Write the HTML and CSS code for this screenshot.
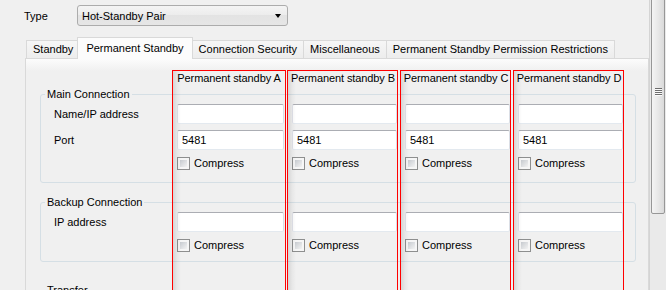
FILE: index.html
```html
<!DOCTYPE html>
<html lang="en">
<head>
    <meta charset="UTF-8">
    <title>Hot-Standby Pair</title>
    <link rel="stylesheet" href="styles.css">
</head>
<body>
    <div class="window">
        <div class="content">
            <div class="type-row">
                <span class="type-label">Type</span>
                <div class="combo">
                    <span>Hot-Standby Pair</span>
                    <span class="arrow"></span>
                </div>
            </div>

            <div class="tabs">
                <div class="tab-strip">
                    <div class="tab">Standby</div>
                    <div class="tab selected">Permanent Standby</div>
                    <div class="tab">Connection Security</div>
                    <div class="tab">Miscellaneous</div>
                    <div class="tab">Permanent Standby Permission Restrictions</div>
                </div>

                <div class="pane">
                    <div class="frames">
                        <div class="frame"></div>
                        <div class="frame"></div>
                        <div class="frame"></div>
                        <div class="frame"></div>
                    </div>

                    <div class="head-row">
                        <span></span>
                        <div class="col-head">Permanent standby A</div>
                        <div class="col-head">Permanent standby B</div>
                        <div class="col-head">Permanent standby C</div>
                        <div class="col-head">Permanent standby D</div>
                    </div>

                    <fieldset class="group main">
                        <legend>Main Connection</legend>
                        <div class="row">
                            <label>Name/IP address</label>
                            <div class="cell"><input type="text"></div>
                            <div class="cell"><input type="text"></div>
                            <div class="cell"><input type="text"></div>
                            <div class="cell"><input type="text"></div>
                        </div>
                        <div class="row">
                            <label>Port</label>
                            <div class="cell"><input type="text" value="5481"></div>
                            <div class="cell"><input type="text" value="5481"></div>
                            <div class="cell"><input type="text" value="5481"></div>
                            <div class="cell"><input type="text" value="5481"></div>
                        </div>
                        <div class="row">
                            <span></span>
                            <div class="cell"><span class="check"><span class="box"></span>Compress</span></div>
                            <div class="cell"><span class="check"><span class="box"></span>Compress</span></div>
                            <div class="cell"><span class="check"><span class="box"></span>Compress</span></div>
                            <div class="cell"><span class="check"><span class="box"></span>Compress</span></div>
                        </div>
                    </fieldset>

                    <fieldset class="group backup">
                        <legend>Backup Connection</legend>
                        <div class="row">
                            <label>IP address</label>
                            <div class="cell"><input type="text"></div>
                            <div class="cell"><input type="text"></div>
                            <div class="cell"><input type="text"></div>
                            <div class="cell"><input type="text"></div>
                        </div>
                        <div class="row">
                            <span></span>
                            <div class="cell"><span class="check"><span class="box"></span>Compress</span></div>
                            <div class="cell"><span class="check"><span class="box"></span>Compress</span></div>
                            <div class="cell"><span class="check"><span class="box"></span>Compress</span></div>
                            <div class="cell"><span class="check"><span class="box"></span>Compress</span></div>
                        </div>
                    </fieldset>

                    <fieldset class="group transfer">
                        <legend>Transfer</legend>
                        <div class="row"><label>&nbsp;</label></div>
                    </fieldset>
                </div>
            </div>
        </div>

        <div class="scrollbar">
            <div class="thumb">
                <div class="grip"><i></i><i></i><i></i><i></i></div>
            </div>
        </div>
    </div>
</body>
</html>
```

FILE: styles.css
```css
:root {
    --bg: #f0f0f0;
    --text: #000000;
    --tab-border: #d9d9d9;
    --group-border: #d5dfe5;
    --frame: #ff0000;
    --cols: 118px 115px 113px 113px 113px;
}

* {
    margin: 0;
    padding: 0;
    box-sizing: border-box;
}

body {
    background-color: var(--bg);
    color: var(--text);
    font-family: 'Liberation Sans', Arial, sans-serif;
    font-size: 11px;
    line-height: 14px;
}

.window {
    display: flex;
    height: 290px;
    overflow: hidden;
}

.content {
    flex: 0 0 649px;
    overflow: hidden;
}

/* type selector */
.type-row {
    display: flex;
    align-items: center;
    padding: 5px 0 0 24px;
}

.type-label {
    width: 53px;
}

.combo {
    display: flex;
    align-items: center;
    justify-content: space-between;
    width: 211px;
    height: 21px;
    padding: 0 4px 0 4px;
    border: 1px solid #acacac;
    border-radius: 3px;
    background: linear-gradient(#f4f4f4, #ececec 50%, #e3e3e3 50%, #e6e6e6);
}

.arrow {
    width: 0;
    height: 0;
    margin-right: 2px;
    border-left: 3.5px solid transparent;
    border-right: 3.5px solid transparent;
    border-top: 4px solid #000;
}

/* tabs */
.tabs {
    margin: 11px 0 0 25px;
    width: 624px;
}

.tab-strip {
    display: flex;
    align-items: flex-end;
    padding-left: 1px;
}

.tab {
    height: 18px;
    line-height: 17px;
    padding: 0 6px;
    margin-right: -1px;
    border: 1px solid var(--tab-border);
    border-bottom: 0;
    background: linear-gradient(#f6f6f6, #ededed);
    white-space: nowrap;
}

.tab.selected {
    position: relative;
    z-index: 1;
    height: 22px;
    line-height: 20px;
    margin: 0 -1px -1px -2px;
    padding: 0 8px;
    background: #fcfcfc;
}

.pane {
    position: relative;
    height: 240px;
    padding: 12px 12px 0 14px;
    border: 1px solid var(--tab-border);
    background: linear-gradient(#fcfcfc, var(--bg) 12px);
}

/* red column frames lie over the group boxes */
.frames {
    position: absolute;
    top: 11px;
    left: 146px;
    bottom: -4px;
    display: grid;
    grid-template-columns: 115px 113px 113px 113px;
    pointer-events: none;
}

.frame {
    margin-right: 2px;
    border: 1px solid var(--frame);
    background: linear-gradient(to right, rgba(0, 0, 0, 0.11), rgba(0, 0, 0, 0.04) 4px, transparent 8px);
}

.frame:first-child {
    margin-right: 1px;
}

.head-row,
.row {
    display: grid;
    grid-template-columns: var(--cols);
    align-items: center;
}

.head-row {
    padding-left: 14px;
}

.col-head {
    padding: 0 2px 0 1px;
    text-align: center;
    white-space: nowrap;
    letter-spacing: -0.1px;
}

/* group boxes */
.group {
    border: 1px solid var(--group-border);
    border-radius: 3px;
    padding: 0 0 12px 4px;
    min-inline-size: auto;
}

.group legend {
    padding: 0 2px;
    line-height: 14px;
}

.group.main {
    margin-top: 2px;
    padding-bottom: 12px;
}

.group.backup {
    margin-top: 12px;
    padding-bottom: 9px;
}

.group.transfer {
    margin-top: 21px;
}

.row {
    margin-left: 9px;
    margin-top: 6px;
}

.group legend + .row {
    margin-top: 3px;
}

.cell {
    padding: 0 3px 0 5px;
}

input {
    display: block;
    width: 100%;
    height: 20px;
    padding: 0 4px;
    border: 1px solid;
    border-color: #abadb3 #dbdfe6 #e3e9ef #e2e3ea;
    border-radius: 2px;
    background: #ffffff;
    color: var(--text);
    font: inherit;
    outline: none;
}

.check {
    display: flex;
    align-items: center;
    gap: 4px;
    height: 14px;
}

.box {
    width: 13px;
    height: 13px;
    padding: 2px;
    border: 1px solid #8e8f8f;
    background: linear-gradient(135deg, #c6cacf, #f3f3f3) content-box, #f6f6f6;
}

/* window scrollbar */
.scrollbar {
    flex: 1;
    border-left: 1px solid #d4d4d4;
    background: #eaeaea;
}

.thumb {
    display: flex;
    align-items: center;
    justify-content: center;
    width: 14px;
    height: 245px;
    margin: -31px 0 0 1px;
    border: 1px solid #979797;
    border-radius: 2px;
    background: linear-gradient(to right, #f4f4f4, #e8e8e8 50%, #dadada);
}

.grip {
    display: flex;
    flex-direction: column;
    gap: 1px;
}

.grip i {
    display: block;
    width: 7px;
    height: 1px;
    background: #6d6d6d;
    box-shadow: 0 1px 0 #fafafa;
}
```
